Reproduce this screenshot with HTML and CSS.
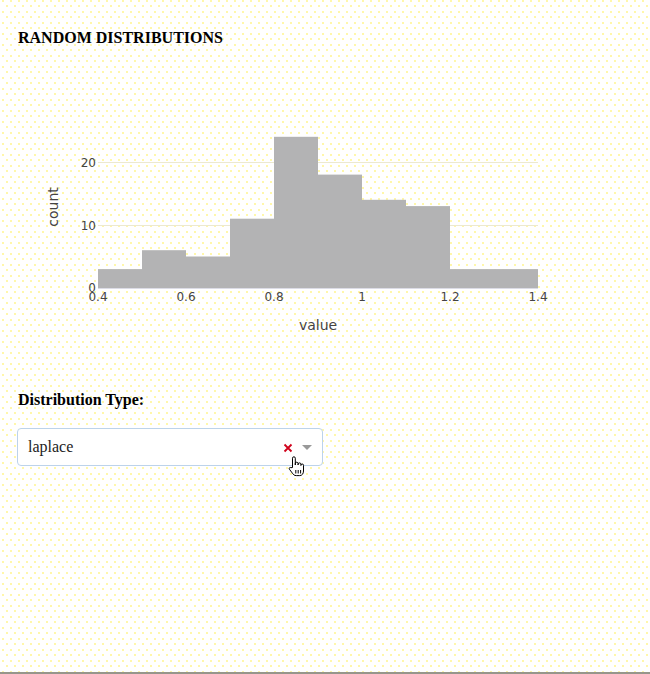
FILE: index.html
```html
<!DOCTYPE html>
<html lang="en">
<head>
    <meta charset="UTF-8">
    <meta name="viewport" content="width=device-width, initial-scale=1.0">
    <title>Random Distributions</title>
    <link rel="stylesheet" href="styles.css">
</head>
<body>
    <div class="page">
        <div class="title">RANDOM DISTRIBUTIONS</div>

        <svg class="chart" width="620" height="280" viewBox="0 0 620 280">
            <!-- grid -->
            <line class="grid" x1="80" y1="92.5" x2="520" y2="92.5"/>
            <line class="grid" x1="80" y1="155.5" x2="520" y2="155.5"/>

            <!-- bars, 0.1 wide bins from 0.4 to 1.4 -->
            <g class="bars">
                <rect x="80" y="199.1" width="44" height="18.9"/>
                <rect x="124" y="180.2" width="44" height="37.8"/>
                <rect x="168" y="186.5" width="44" height="31.5"/>
                <rect x="212" y="148.7" width="44" height="69.3"/>
                <rect x="256" y="66.8" width="44" height="151.2"/>
                <rect x="300" y="104.6" width="44" height="113.4"/>
                <rect x="344" y="129.8" width="44" height="88.2"/>
                <rect x="388" y="136.1" width="44" height="81.9"/>
                <rect x="432" y="199.1" width="44" height="18.9"/>
                <rect x="476" y="199.1" width="44" height="18.9"/>
            </g>
            <line class="zero" x1="80" y1="218.5" x2="520" y2="218.5"/>

            <g class="ticks ytick">
                <text x="78" y="222">0</text>
                <text x="78" y="159.5">10</text>
                <text x="78" y="96.5">20</text>
            </g>
            <g class="ticks xtick">
                <text x="80" y="231">0.4</text>
                <text x="168" y="231">0.6</text>
                <text x="256" y="231">0.8</text>
                <text x="344" y="231">1</text>
                <text x="432" y="231">1.2</text>
                <text x="520" y="231">1.4</text>
            </g>
            <text class="axis-title" x="300" y="260">value</text>
            <text class="axis-title" transform="translate(40 137) rotate(-90)">count</text>
        </svg>

        <div class="label">Distribution Type:</div>

        <div class="dropdown">
            <div class="dropdown-value">laplace</div>
            <span class="dropdown-clear">
                <svg width="10" height="10" viewBox="0 0 10 10">
                    <path d="M1.5 1.5 L8.5 8.5 M8.5 1.5 L1.5 8.5" stroke="#d0021b" stroke-width="1.8"/>
                </svg>
            </span>
            <span class="dropdown-arrow"></span>

            <svg class="cursor" width="17" height="21" viewBox="0 0 17 21">
                <path d="M4.5 11.5 V2.2 a1.4 1.4 0 0 1 2.8 0 V9 V7.6 a1.4 1.4 0 0 1 2.8 0 V9 V8.3 a1.4 1.4 0 0 1 2.8 0 V9.5 V9.3 a1.3 1.3 0 0 1 2.6 0 V15 c0 2.6 -1.4 4.6 -3.8 4.6 H8.3 c-2 0 -2.9 -1 -3.9 -2.4 L1.4 13.2 c-0.7 -1.1 0.5 -2.3 1.5 -1.5 Z"
                      fill="#fff" stroke="#000" stroke-width="1"/>
                <path d="M7.8 14 V17.5 M10.2 14 V17.5 M12.6 14 V17.5" stroke="#000" stroke-width="1"/>
            </svg>
        </div>
    </div>
</body>
</html>
```

FILE: styles.css
```css
html, body {
    margin: 0;
    padding: 0;
}

body {
    font-family: "Liberation Serif", "Times New Roman", serif;
    color: #000;
    background-color: #fff;
    background-image:
        radial-gradient(circle at 1px 1px, #fff7a8 0.7px, transparent 0.9px),
        radial-gradient(circle at 1px 1px, #fff7a8 0.7px, transparent 0.9px);
    background-size: 8px 11px;
    background-position: 2px 0, 6px 5px;
}

.page {
    box-sizing: border-box;
    height: 674px;
    padding: 29px 18px 0;
    border-bottom: 2px solid #97968b;
}

.title {
    font-size: 16px;
    font-weight: bold;
    line-height: 18px;
}

.chart {
    display: block;
    margin-top: 23px;
    overflow: visible;
}

.grid {
    stroke: #ece9cf;
    stroke-width: 1;
}

.zero {
    stroke: #dcdce6;
    stroke-width: 1;
}

.bars rect {
    fill: #b3b3b4;
}

.ticks text {
    font-family: "DejaVu Sans", Verdana, sans-serif;
    font-size: 12px;
    fill: #444;
}

.ytick text {
    text-anchor: end;
}

.xtick text {
    text-anchor: middle;
}

.axis-title {
    font-family: "DejaVu Sans", Verdana, sans-serif;
    font-size: 14px;
    fill: #444;
    text-anchor: middle;
}

.label {
    margin-top: 41px;
    font-size: 16px;
    font-weight: bold;
    line-height: 18px;
}

.dropdown {
    position: relative;
    display: flex;
    align-items: center;
    width: 304px;
    height: 36px;
    margin-top: 19px;
    margin-left: -1px;
    border: 1px solid #bcd3ea;
    border-radius: 4px;
    background-color: #fff;
}

.dropdown-value {
    flex: 1;
    padding-left: 10px;
    font-size: 16px;
    line-height: 36px;
    color: #222;
}

.dropdown-clear {
    display: flex;
    width: 10px;
    margin-right: 9px;
    margin-top: 1px;
}

.dropdown-arrow {
    width: 0;
    height: 0;
    margin-right: 10px;
    border-style: solid;
    border-width: 5px 5px 2.5px;
    border-color: #999 transparent transparent;
    margin-top: 2px;
}

/* mouse pointer captured over the clear button */
.cursor {
    position: absolute;
    left: 270px;
    top: 27px;
}
```
